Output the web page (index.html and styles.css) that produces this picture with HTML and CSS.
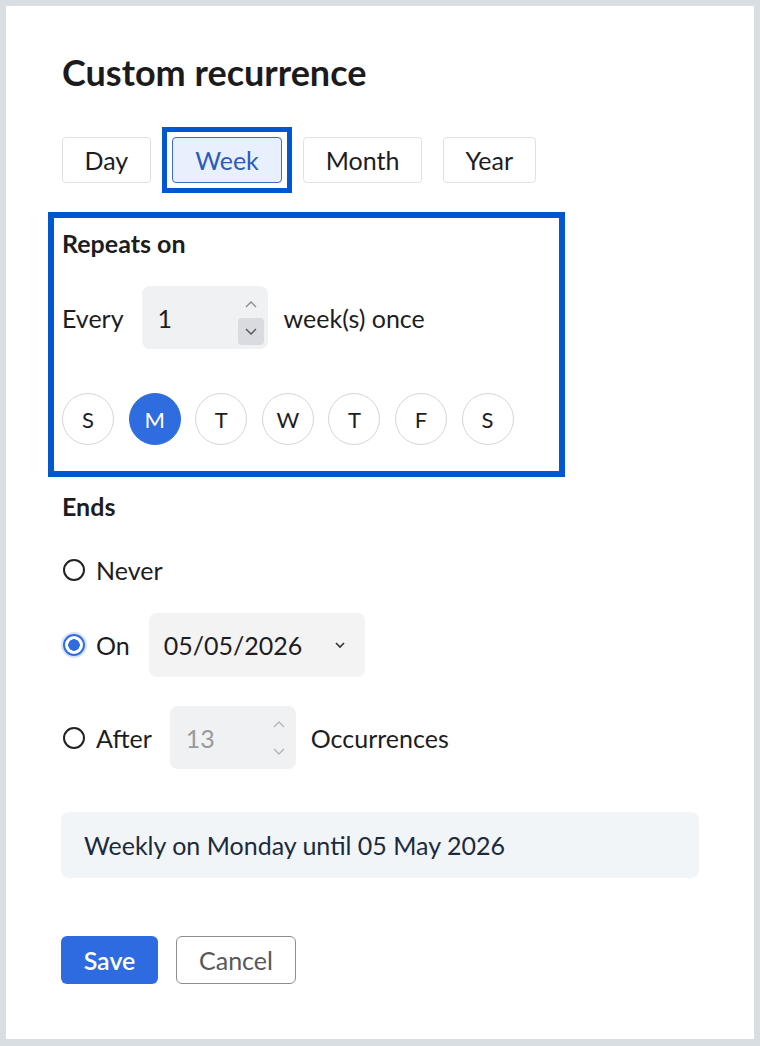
FILE: index.html
```html
<!DOCTYPE html>
<html lang="en">
<head>
  <meta charset="UTF-8" />
  <meta name="viewport" content="width=device-width, initial-scale=1.0" />
  <title>Custom recurrence</title>
  <link rel="stylesheet" href="styles.css">
</head>
<body>
  <div class="panel">
    <h1>Custom recurrence</h1>

    <div class="tabs">
      <button class="tab">Day</button>
      <button class="tab active">Week</button>
      <button class="tab">Month</button>
      <button class="tab">Year</button>
    </div>

    <div class="repeats">
      <h2>Repeats on</h2>
      <div class="row every">
        <span>Every</span>
        <div class="spin">
          <span class="num">1</span>
          <div class="arrows">
            <span class="arr up"><svg width="14" height="9" viewBox="0 0 14 9"><path d="M2 7 L7 2 L12 7" fill="none" stroke="#8a8a8a" stroke-width="1.4"/></svg></span>
            <span class="arr down hot"><svg width="14" height="9" viewBox="0 0 14 9"><path d="M2 2 L7 7 L12 2" fill="none" stroke="#555" stroke-width="1.4"/></svg></span>
          </div>
        </div>
        <span>week(s) once</span>
      </div>
      <div class="days">
        <span class="day">S</span>
        <span class="day on">M</span>
        <span class="day">T</span>
        <span class="day">W</span>
        <span class="day">T</span>
        <span class="day">F</span>
        <span class="day">S</span>
      </div>
    </div>

    <h2 class="ends">Ends</h2>

    <div class="row opt never">
      <span class="radio"></span>
      <span>Never</span>
    </div>
    <div class="row opt on-row">
      <span class="radio checked"></span>
      <span>On</span>
      <div class="select">
        <span>05/05/2026</span>
        <svg width="14" height="10" viewBox="0 0 14 10"><path d="M3 3 L7 7 L11 3" fill="none" stroke="#333" stroke-width="1.6"/></svg>
      </div>
    </div>
    <div class="row opt after">
      <span class="radio"></span>
      <span>After</span>
      <div class="spin dim">
        <span class="num">13</span>
        <div class="arrows">
          <span class="arr up"><svg width="14" height="9" viewBox="0 0 14 9"><path d="M2 7 L7 2 L12 7" fill="none" stroke="#b4b4b4" stroke-width="1.4"/></svg></span>
          <span class="arr down"><svg width="14" height="9" viewBox="0 0 14 9"><path d="M2 2 L7 7 L12 2" fill="none" stroke="#b4b4b4" stroke-width="1.4"/></svg></span>
        </div>
      </div>
      <span>Occurrences</span>
    </div>

    <div class="summary">Weekly on Monday until 05 May 2026</div>

    <div class="actions">
      <button class="btn save">Save</button>
      <button class="btn cancel">Cancel</button>
    </div>
  </div>
</body>
</html>
```

FILE: styles.css
```css
body {
  margin: 0;
  background-color: #d8dee2;
  font-family: 'Lato', 'Liberation Sans', sans-serif;
  color: #1d1d1f;
}
.panel {
  margin: 6px;
  width: 748px;
  height: 1033px;
  box-sizing: border-box;
  background-color: #ffffff;
  padding: 45px 0 0 56px;
}
h1 {
  margin: 0;
  font-size: 36px;
  line-height: 43px;
  font-weight: 700;
  color: #1b1b1d;
}
h2 {
  margin: 0;
  font-size: 25px;
  line-height: 30px;
  font-weight: 700;
}
.tabs {
  display: flex;
  gap: 21px;
  margin-top: 43px;
}
.tab {
  position: relative;
  font-family: inherit;
  font-size: 25px;
  height: 46px;
  padding: 0 21.5px;
  background-color: #ffffff;
  border: 1px solid #e1e1e3;
  border-radius: 4px;
  color: #1d1d1f;
}
.tab.active {
  padding: 0 22.5px;
  background-color: #e8f0fd;
  border-color: #3d6cc4;
  color: #2c5cba;
}
/* highlight frame round the active tab */
.tab.active::after {
  content: "";
  position: absolute;
  inset: -11px;
  border: 5px solid #0057cf;
}
.repeats {
  margin: 29px 0 0 -14px;
  width: 517px;
  box-sizing: border-box;
  border: 6px solid #0057cf;
  padding: 10px 8px 26px 8px;
}
.row {
  display: flex;
  align-items: center;
  font-size: 25px;
}
.every {
  margin-top: 28px;
  gap: 18px;
}
.every .spin { margin-right: -2px; }
.spin {
  width: 126px;
  height: 63px;
  box-sizing: border-box;
  background-color: #f0f1f3;
  border-radius: 8px;
  display: flex;
  align-items: center;
  padding-left: 16px;
}
.spin .num { flex: 1; }
.spin.dim .num { color: #9a9a9e; }
.arrows {
  display: flex;
  flex-direction: column;
  width: 26px;
  height: 54px;
  margin-right: 4px;
}
.arr {
  flex: 1;
  display: flex;
  align-items: center;
  justify-content: center;
  border-radius: 4px;
}
.arr.hot { background-color: #dadbde; }
.days {
  display: flex;
  gap: 14.6px;
  margin-top: 44px;
}
.day {
  width: 52px;
  height: 52px;
  box-sizing: border-box;
  border: 1px solid #d6d6d8;
  border-radius: 50%;
  display: flex;
  align-items: center;
  justify-content: center;
  font-size: 22px;
  color: #1d1d1f;
}
.day.on {
  background-color: #2f6ce0;
  border-color: #2f6ce0;
  color: #ffffff;
}
.ends { margin-top: 14px; }
.opt { gap: 11px; padding-left: 1px; }
.never { margin-top: 33px; height: 32px; }
.on-row { margin-top: 27px; height: 64px; }
.after { margin-top: 29px; height: 63px; }
.on-row .select { margin-left: 8px; }
.after .spin { margin: 0 4px 0 7px; }
.radio {
  width: 22px;
  height: 22px;
  box-sizing: border-box;
  border: 2px solid #222224;
  border-radius: 50%;
}
.radio.checked {
  border-color: #2f6ce0;
  background: radial-gradient(circle, #2f6ce0 0 5.5px, #ffffff 6px);
  box-shadow: 0 0 0 2px #d6e3fa;
}
.select {
  width: 216px;
  height: 64px;
  box-sizing: border-box;
  background-color: #f3f3f4;
  border-radius: 8px;
  display: flex;
  align-items: center;
  justify-content: space-between;
  padding: 0 18px 0 15px;
}
.summary {
  margin-top: 43px;
  width: 638px;
  height: 66px;
  box-sizing: border-box;
  margin-left: -1px;
  background-color: #f2f5f8;
  border-radius: 8px;
  display: flex;
  align-items: center;
  padding-left: 23px;
  font-size: 25px;
  color: #1c2a3d;
}
.actions {
  display: flex;
  gap: 18px;
  margin: 58px 0 0 -1px;
}
.btn {
  font-family: inherit;
  font-size: 25px;
  height: 48px;
  border-radius: 6px;
  cursor: pointer;
}
.save {
  width: 97px;
  background-color: #2e6ae0;
  border: none;
  color: #ffffff;
  font-weight: 600;
}
.cancel {
  width: 120px;
  background-color: #ffffff;
  border: 1px solid #8e8e92;
  color: #58585c;
}
```
